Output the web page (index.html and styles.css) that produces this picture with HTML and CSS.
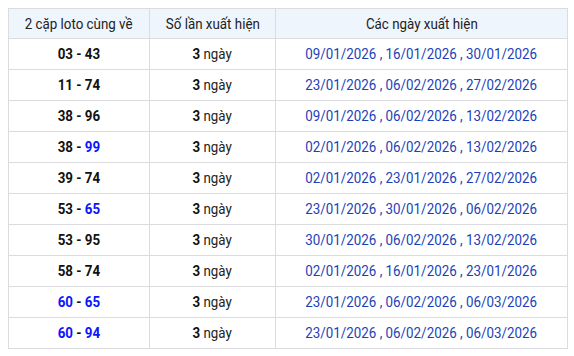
FILE: index.html
```html
<!DOCTYPE html>
<html>
<head>
<meta charset="utf-8">
<link rel="stylesheet" href="styles.css">
</head>
<body>
<table class="loto">
  <thead>
    <tr><th class="c1"><span class="t">2 cặp loto cùng về</span></th><th class="c2"><span class="t">Số lần xuất hiện</span></th><th class="c3"><span class="t">Các ngày xuất hiện</span></th></tr>
  </thead>
  <tbody>
    <tr><td class="pair"><span class="t">03 - 43</span></td><td><span class="t"><b>3</b> ngày</span></td><td class="dates"><span class="t">09/01/2026 , 16/01/2026 , 30/01/2026</span></td></tr>
    <tr><td class="pair"><span class="t">11 - 74</span></td><td><span class="t"><b>3</b> ngày</span></td><td class="dates"><span class="t">23/01/2026 , 06/02/2026 , 27/02/2026</span></td></tr>
    <tr><td class="pair"><span class="t">38 - 96</span></td><td><span class="t"><b>3</b> ngày</span></td><td class="dates"><span class="t">09/01/2026 , 06/02/2026 , 13/02/2026</span></td></tr>
    <tr><td class="pair"><span class="t">38 - <span class="hl">99</span></span></td><td><span class="t"><b>3</b> ngày</span></td><td class="dates"><span class="t">02/01/2026 , 06/02/2026 , 13/02/2026</span></td></tr>
    <tr><td class="pair"><span class="t">39 - 74</span></td><td><span class="t"><b>3</b> ngày</span></td><td class="dates"><span class="t">02/01/2026 , 23/01/2026 , 27/02/2026</span></td></tr>
    <tr><td class="pair"><span class="t">53 - <span class="hl">65</span></span></td><td><span class="t"><b>3</b> ngày</span></td><td class="dates"><span class="t">23/01/2026 , 30/01/2026 , 06/02/2026</span></td></tr>
    <tr><td class="pair"><span class="t">53 - 95</span></td><td><span class="t"><b>3</b> ngày</span></td><td class="dates"><span class="t">30/01/2026 , 06/02/2026 , 13/02/2026</span></td></tr>
    <tr><td class="pair"><span class="t">58 - 74</span></td><td><span class="t"><b>3</b> ngày</span></td><td class="dates"><span class="t">02/01/2026 , 16/01/2026 , 23/01/2026</span></td></tr>
    <tr><td class="pair"><span class="t"><span class="hl">60</span> - <span class="hl">65</span></span></td><td><span class="t"><b>3</b> ngày</span></td><td class="dates"><span class="t">23/01/2026 , 06/02/2026 , 06/03/2026</span></td></tr>
    <tr><td class="pair"><span class="t"><span class="hl">60</span> - <span class="hl">94</span></span></td><td><span class="t"><b>3</b> ngày</span></td><td class="dates"><span class="t">23/01/2026 , 06/02/2026 , 06/03/2026</span></td></tr>
  </tbody>
</table>
</body>
</html>
```

FILE: styles.css
```css
html, body { margin: 0; padding: 0; background: #fff; }
body { padding: 8px; font-family: Roboto, "Liberation Sans", sans-serif; font-size: 15px; color: #222; }
.loto { border-collapse: collapse; width: 560px; table-layout: fixed; }
.loto th, .loto td { border: 1px solid #dcdce0; text-align: center; padding: 0; white-space: nowrap; }
.loto th { background: #eef5fc; font-weight: normal; height: 29px; color: #222; }
.loto td { height: 30px; }
.t { display: inline-block; transform: scaleX(0.89); transform-origin: center; }
.c1 { width: 140px; }
.c2 { width: 125px; }
.pair { font-weight: bold; color: #111; }
.hl { color: #0a14ff; }
.dates { color: #1c3fb8; }
b { color: #111; }
```
